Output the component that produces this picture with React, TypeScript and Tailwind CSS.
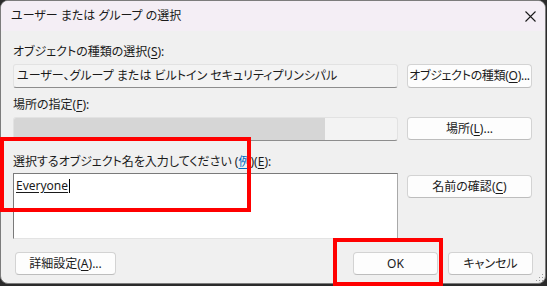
import React from 'react';

const Key = ({ k }: { k: string }) => (
  <>
    (<span className="underline underline-offset-[2px]">{k}</span>)
  </>
);

const Btn = ({ children, className = '' }: { children: React.ReactNode; className?: string }) => (
  <button
    className={`flex items-center justify-center whitespace-nowrap rounded-[4px] border border-[#d3d3d3] border-b-[#bdbdbd] bg-[#fdfdfd] text-[12px] leading-[16px] text-[#1a1a1a] ${className}`}
  >
    {children}
  </button>
);

const App: React.FC = () => {
  return (
    <div className="relative w-[547px] h-[286px] bg-[#2b2b2b] font-['Noto_Sans','Noto_Sans_CJK_JP',sans-serif] [font-feature-settings:'palt'] text-[#1a1a1a]">
      {/* Dialog window */}
      <div className="relative w-[546px] h-[284px] rounded-[8px] border border-[#7c7c7c] bg-[#f0f0f0] overflow-hidden flex flex-col">
        {/* Title bar */}
        <div className="h-[30px] bg-[#f4eef5] flex items-center justify-between pl-[10px] pr-[9px]">
          <span className="text-[12px] leading-[16px]">ユーザー または グループ の選択</span>
          <svg width="11" height="11" viewBox="0 0 11 11" className="mt-[1px]">
            <path d="M0.5 0.5L10.5 10.5M10.5 0.5L0.5 10.5" stroke="#1a1a1a" strokeWidth="1.1" fill="none" />
          </svg>
        </div>

        {/* Body */}
        <div className="flex-1 px-[12px] pt-[13px] text-[12px] leading-[16px]">
          <p>
            オブジェクトの種類の選択<Key k="S" />:
          </p>
          <div className="mt-[4px] flex gap-[9px]">
            <div className="w-[385px] h-[24px] rounded-[3px] border border-[#e2e2e2] border-b-[#8d8d8d] bg-[#f3f3f3] pl-[3px] flex items-center">
              ユーザー、グループ または ビルトイン セキュリティプリンシパル
            </div>
            <Btn className="w-[125px] h-[24px] tracking-[-0.3px]">
              オブジェクトの種類<Key k="O" />...
            </Btn>
          </div>

          <p className="mt-[9px]">
            場所の指定<Key k="F" />:
          </p>
          <div className="mt-[4px] flex gap-[9px]">
            <div className="w-[385px] h-[24px] rounded-[3px] border border-[#e2e2e2] border-b-[#8d8d8d] bg-[#f3f3f3] flex overflow-hidden">
              <div className="w-[311px] h-full bg-[#d6d6d6]" />
            </div>
            <Btn className="w-[125px] h-[23px]">
              場所<Key k="L" />...
            </Btn>
          </div>

          <p className="mt-[13px]">
            選択するオブジェクト名を入力してください (<span className="text-[#0067c0] underline underline-offset-[2px]">例</span>)<Key k="E" />:
          </p>
          <div className="mt-[3px] flex gap-[9px]">
            <div className="w-[385px] h-[66px] border border-t-[#7a7a7a] border-l-[#7a7a7a] border-r-[#a9a9a9] border-b-[#e3e3e3] bg-white pl-[2px] pt-[4px]">
              <span className="inline-flex items-center">
                <span className="underline underline-offset-[2px]">Everyone</span>
                <span className="ml-[1px] w-[1px] h-[14px] bg-black" />
              </span>
            </div>
            <div className="w-[125px] pt-[2px]">
              <Btn className="w-[125px] h-[23px]">
                名前の確認<Key k="C" />
              </Btn>
            </div>
          </div>

          <div className="mt-[13px] flex items-center justify-between">
            <Btn className="ml-[2px] w-[101px] h-[23px]">
              詳細設定<Key k="A" />...
            </Btn>
            <div className="flex gap-[10px]">
              <Btn className="w-[85px] h-[23px] border-[#0067c0] border-b-[#0067c0]">OK</Btn>
              <Btn className="w-[85px] h-[23px]">キャンセル</Btn>
            </div>
          </div>
        </div>

        {/* Resize grip */}
        <svg width="8" height="8" viewBox="0 0 8 8" className="absolute right-[1px] bottom-[1px]">
          <rect x="6" y="0" width="1" height="1" fill="#9a9a9a" />
          <rect x="3" y="3" width="1" height="1" fill="#9a9a9a" />
          <rect x="6" y="3" width="1" height="1" fill="#9a9a9a" />
          <rect x="0" y="6" width="1" height="1" fill="#9a9a9a" />
          <rect x="3" y="6" width="1" height="1" fill="#9a9a9a" />
          <rect x="6" y="6" width="1" height="1" fill="#9a9a9a" />
        </svg>
      </div>

      {/* Red annotation boxes */}
      <div className="absolute left-0 top-[137px] w-[251px] h-[75px] border-[4px] border-[#ff0000]" />
      <div className="absolute left-[333px] top-[238px] w-[110px] h-[48px] border-[4px] border-[#ff0000]" />
    </div>
  );
};

export default App;
